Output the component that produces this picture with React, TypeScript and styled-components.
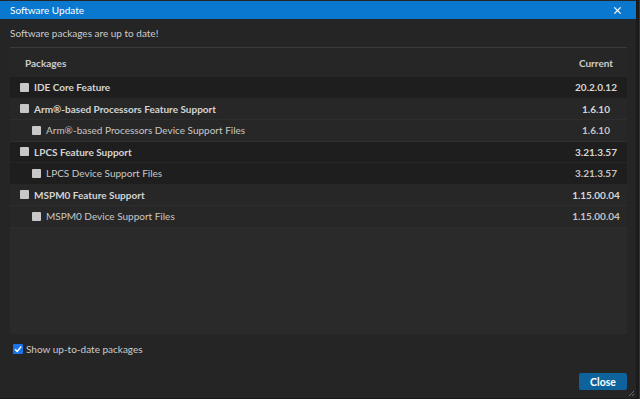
import React from 'react';
import styled, { createGlobalStyle } from 'styled-components';

type Pkg = { name: string; version: string; level: number; shade: 'dark' | 'light' };

const packages: Pkg[] = [
    { name: 'IDE Core Feature', version: '20.2.0.12', level: 0, shade: 'dark' },
    { name: 'Arm®-based Processors Feature Support', version: '1.6.10', level: 0, shade: 'light' },
    { name: 'Arm®-based Processors Device Support Files', version: '1.6.10', level: 1, shade: 'light' },
    { name: 'LPCS Feature Support', version: '3.21.3.57', level: 0, shade: 'dark' },
    { name: 'LPCS Device Support Files', version: '3.21.3.57', level: 1, shade: 'dark' },
    { name: 'MSPM0 Feature Support', version: '1.15.00.04', level: 0, shade: 'light' },
    { name: 'MSPM0 Device Support Files', version: '1.15.00.04', level: 1, shade: 'light' },
];

const GlobalStyle = createGlobalStyle`
    html, body {
        margin: 0;
        padding: 0;
        background: #1b1b1b;
        overflow: hidden;
    }
    body {
        font-family: Lato, "Noto Sans", sans-serif;
        font-size: 10px;
        color: #cccccc;
    }
`

const App: React.FC = () => {
    return <Page>
        <GlobalStyle />
        <Dialog>
            <TitleBar>
                <Title>Software Update</Title>
                <CloseX viewBox="0 0 10 10">
                    <path d="M1.5 1.5 L8.5 8.5 M8.5 1.5 L1.5 8.5" stroke="#ffffff" strokeWidth="1.4" />
                </CloseX>
            </TitleBar>
            <Body>
                <Message>Software packages are up to date!</Message>
                <Table>
                    <HeaderRow>
                        <HeaderCell>Packages</HeaderCell>
                        <VersionHeader>Current</VersionHeader>
                    </HeaderRow>
                    {packages.map((p) => (
                        <Row key={p.name} shade={p.shade}>
                            <NameCell level={p.level}>
                                <GrayBox />
                                <NameText feature={p.level === 0}>{p.name}</NameText>
                            </NameCell>
                            <VersionCell feature={p.level === 0}>{p.version}</VersionCell>
                        </Row>
                    ))}
                    <Filler />
                </Table>
                <ShowRow>
                    <BlueCheck viewBox="0 0 10 10">
                        <rect x="0" y="0" width="10" height="10" rx="1" fill="#1a73e8" />
                        <path d="M2 5.2 L4.2 7.4 L8.2 2.6" stroke="#ffffff" strokeWidth="1.5" fill="none" />
                    </BlueCheck>
                    <span>Show up-to-date packages</span>
                </ShowRow>
                <Footer>
                    <CloseButton>Close</CloseButton>
                </Footer>
            </Body>
            <Grip viewBox="0 0 8 8">
                <path d="M7 2 L2 7 M7 5 L5 7" stroke="#6a6a6a" strokeWidth="1" />
            </Grip>
        </Dialog>
        <Backdrop />
    </Page>
}

export default App;

const Page = styled.div`
    width: 640px;
    height: 399px;
    display: flex;
    flex-direction: row;
    background: #1b1b1b;
`

const Dialog = styled.div`
    position: relative;
    width: 636px;
    height: 398px;
    display: flex;
    flex-direction: column;
    background: #252526;
`

const Backdrop = styled.div`
    flex: 1;
    background: #1b1b1b;
    border-right: 1px solid #343434;
`

const TitleBar = styled.div`
    height: 18px;
    margin-top: 1px;
    background: #0a78cf;
    display: flex;
    align-items: center;
    justify-content: space-between;
    padding: 0 14px 0 10px;
`

const Title = styled.span`
    color: #ffffff;
    font-size: 10px;
`

const CloseX = styled.svg`
    width: 9px;
    height: 9px;
`

const Body = styled.div`
    flex: 1;
    display: flex;
    flex-direction: column;
    padding: 0 9px 0 10px;
`

const Message = styled.div`
    height: 28px;
    display: flex;
    align-items: center;
`

const Table = styled.div`
    height: 286px;
    display: flex;
    flex-direction: column;
    border-top: 1px solid #3a3a3a;
    background: #282828;
`

const HeaderRow = styled.div`
    height: 29px;
    flex: none;
    display: flex;
    align-items: center;
    background: #262626;
`

const HeaderCell = styled.div`
    flex: 1;
    padding-left: 15px;
    font-weight: 700;
`

const VersionHeader = styled.div`
    width: 62px;
    text-align: center;
    font-weight: 700;
`

const Row = styled.div<{ shade: 'dark' | 'light' }>`
    box-sizing: border-box;
    height: 21.5px;
    flex: none;
    display: flex;
    align-items: center;
    background: ${(p) => (p.shade === 'dark' ? '#1e1e1e' : '#272727')};
    border-bottom: 1px solid ${(p) => (p.shade === 'dark' ? '#262626' : '#2e2e2e')};
`

const NameCell = styled.div<{ level: number }>`
    flex: 1;
    display: flex;
    align-items: center;
    gap: 5px;
    padding-left: ${(p) => 10 + p.level * 12}px;
`

const GrayBox = styled.span`
    width: 9px;
    height: 9px;
    border-radius: 1px;
    background: #c8c8c8;
`

const NameText = styled.span<{ feature: boolean }>`
    font-weight: ${(p) => (p.feature ? 700 : 400)};
    color: ${(p) => (p.feature ? '#d4d4d4' : '#c8c8c8')};
`

const VersionCell = styled.div<{ feature: boolean }>`
    width: 62px;
    text-align: center;
    font-weight: 700;
    color: ${(p) => (p.feature ? '#d6d6d6' : '#c4c4c4')};
`

const Filler = styled.div`
    flex: 1;
    background: #2a2a2a;
`

const ShowRow = styled.div`
    height: 30px;
    display: flex;
    align-items: center;
    gap: 3px;
    padding-left: 3px;
`

const BlueCheck = styled.svg`
    width: 10px;
    height: 10px;
`

const Footer = styled.div`
    flex: 1;
    display: flex;
    justify-content: flex-end;
    align-items: flex-start;
    padding-top: 9px;
`

const CloseButton = styled.button`
    width: 48px;
    height: 17px;
    border: none;
    border-radius: 2px;
    background: #0e639c;
    color: #ffffff;
    font-family: Lato, "Noto Sans", sans-serif;
    font-size: 10.5px;
    font-weight: 700;
    padding: 0;
`

const Grip = styled.svg`
    position: absolute;
    right: 1px;
    bottom: 1px;
    width: 8px;
    height: 8px;
`
